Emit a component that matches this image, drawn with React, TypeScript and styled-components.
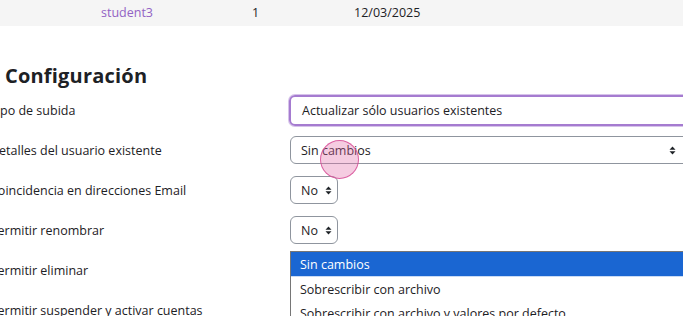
import React from 'react'
import styled, { createGlobalStyle } from 'styled-components'

const GlobalStyle = createGlobalStyle`
  html, body {
    margin: 0;
    padding: 0;
    background: #fff;
    overflow: hidden;
  }
  body {
    font-family: 'Open Sans', 'Liberation Sans', sans-serif;
    color: #1d2125;
    font-size: 13px;
  }
`

const rows = [
  { label: 'Tipo de subida', kind: 'focus', value: 'Actualizar sólo usuarios existentes' },
  { label: 'Detalles del usuario existente', kind: 'wide', value: 'Sin cambios' },
  { label: 'Coincidencia en direcciones Email', kind: 'small', value: 'No' },
  { label: 'Permitir renombrar', kind: 'small', value: 'No' },
  { label: 'Permitir eliminar', kind: 'none', value: '' },
  { label: 'Permitir suspender y activar cuentas', kind: 'none', value: '' }
]

const options = ['Sin cambios', 'Sobrescribir con archivo', 'Sobrescribir con archivo y valores por defecto']

const Arrows = () => (
  <ArrowIcon width="7" height="9" viewBox="0 0 7 9">
    <path d="M3.5 0.5 L6.5 3.8 L0.5 3.8 Z" fill="#1d2125" />
    <path d="M3.5 8.5 L6.5 5.2 L0.5 5.2 Z" fill="#1d2125" />
  </ArrowIcon>
)

const App = () => {
  return (
    <>
      <GlobalStyle />
      <Page>
        <TableRow>
          <UserLink>student3</UserLink>
          <Cell>1</Cell>
          <Cell>12/03/2025</Cell>
        </TableRow>
        <Section>
          <Heading>Configuración</Heading>
          <Form>
            {rows.map((row, i) => (
              <FormRow key={i}>
                <Label>{row.label}</Label>
                <Control>
                  {row.kind === 'focus' && <FocusSelect>{row.value}</FocusSelect>}
                  {row.kind === 'wide' && (
                    <WideSelect>
                      {row.value}
                      <Arrows />
                    </WideSelect>
                  )}
                  {row.kind === 'small' && (
                    <SmallSelect>
                      {row.value}
                      <Arrows />
                    </SmallSelect>
                  )}
                </Control>
              </FormRow>
            ))}
          </Form>
          <Popup>
            {options.map((opt, i) => (
              <Option key={i} $active={i === 0}>
                {opt}
              </Option>
            ))}
          </Popup>
          <Touch />
        </Section>
      </Page>
    </>
  )
}

const Page = styled.div`
  width: 683px;
  height: 316px;
  overflow: hidden;
  position: relative;
`

const TableRow = styled.div`
  display: grid;
  grid-template-columns: 101px 151px 102px 1fr;
  height: 26px;
  align-items: center;
  background: #f5f5f5;
  padding-bottom: 2px;
  box-sizing: border-box;
  & > :first-child {
    grid-column: 2;
  }
`

const Cell = styled.div`
  font-size: 12.5px;
  color: #1d2125;
`

const UserLink = styled(Cell)`
  color: #9263c4;
`

const Section = styled.div`
  position: relative;
  padding-top: 36px;
`

const Heading = styled.h3`
  margin: 0 0 0 5px;
  font-size: 20px;
  font-weight: 700;
  line-height: 28px;
  height: 28px;
  letter-spacing: 0.2px;
`

const Form = styled.div`
  display: flex;
  flex-direction: column;
  margin-left: -10px;
`

const FormRow = styled.div`
  display: grid;
  grid-template-columns: 300px 1fr;
  height: 40px;
  align-items: center;
`

const Label = styled.div`
  font-size: 12.5px;
  color: #1d2125;
`

const Control = styled.div`
  display: flex;
  align-items: center;
`

const ArrowIcon = styled.svg`
  flex-shrink: 0;
`

const FocusSelect = styled.div`
  box-sizing: border-box;
  width: 420px;
  height: 31px;
  margin-left: -1px;
  padding: 0 11px;
  display: flex;
  align-items: center;
  border: 2px solid #a57bd0;
  box-shadow: 0 0 0 1px rgba(165, 123, 208, 0.45);
  border-radius: 6px;
  font-size: 12.5px;
  color: #1d2125;
`

const WideSelect = styled.div`
  box-sizing: border-box;
  width: 400px;
  height: 28px;
  padding: 0 13px 0 10px;
  display: flex;
  align-items: center;
  justify-content: space-between;
  border: 1px solid #8f959e;
  border-radius: 6px;
  font-size: 12.5px;
`

const SmallSelect = styled(WideSelect)`
  width: 48px;
  padding: 0 0 0 10px;
  justify-content: flex-start;
  gap: 7px;
`

const Popup = styled.div`
  position: absolute;
  left: 290px;
  top: 225px;
  width: 420px;
  border: 1px solid #767676;
  border-right: none;
  background: #fff;
`

const Option = styled.div<{ $active: boolean }>`
  height: 24px;
  display: flex;
  align-items: center;
  padding-left: 9px;
  font-size: 12.5px;
  background: ${({ $active }) => ($active ? '#1a66d2' : '#fff')};
  color: ${({ $active }) => ($active ? '#fff' : '#1d2125')};
  border-bottom: ${({ $active }) => ($active ? '1px solid #c9dbf5' : 'none')};
`

const Touch = styled.div`
  position: absolute;
  left: 320px;
  top: 114px;
  width: 39px;
  height: 39px;
  border-radius: 50%;
  background: rgba(226, 110, 170, 0.35);
  border: 1.5px solid rgba(214, 76, 150, 0.85);
  box-sizing: border-box;
`

export default App
